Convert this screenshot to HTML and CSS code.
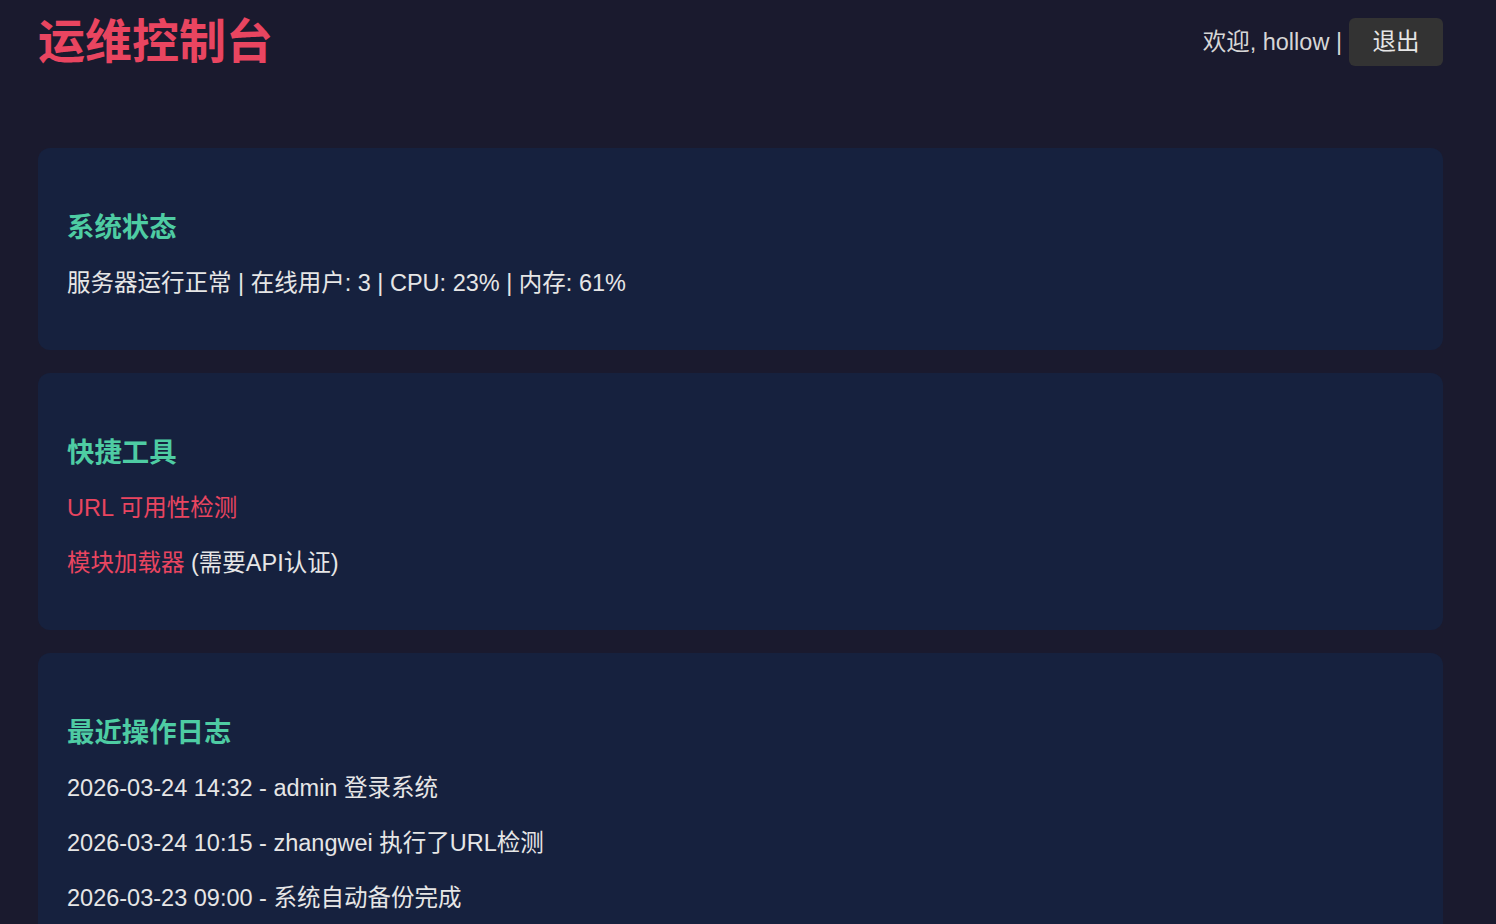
FILE: index.html
```html
<!DOCTYPE html>
<html lang="zh-CN">
<head>
<meta charset="utf-8">
<title>运维控制台</title>
<link rel="stylesheet" href="styles.css">
</head>
<body>
<div class="page">
  <header class="header">
    <h1 class="title">运维控制台</h1>
    <div class="user">
      <span class="welcome">欢迎, hollow |</span>
      <button class="logout" type="button">退出</button>
    </div>
  </header>

  <section class="card">
    <h3 class="card-title">系统状态</h3>
    <p class="line">服务器运行正常 | 在线用户: 3 | CPU: 23% | 内存: 61%</p>
  </section>

  <section class="card">
    <h3 class="card-title">快捷工具</h3>
    <p class="line"><a class="link" href="#">URL 可用性检测</a></p>
    <p class="line"><a class="link" href="#">模块加载器</a> (需要API认证)</p>
  </section>

  <section class="card">
    <h3 class="card-title">最近操作日志</h3>
    <p class="line">2026-03-24 14:32 - admin 登录系统</p>
    <p class="line">2026-03-24 10:15 - zhangwei 执行了URL检测</p>
    <p class="line">2026-03-23 09:00 - 系统自动备份完成</p>
  </section>
</div>
</body>
</html>
```

FILE: styles.css
```css
html, body {
  margin: 0;
  padding: 0;
}

body {
  background: #1a1a2e;
  color: #e6e6e6;
  font-family: "Liberation Sans", "Noto Sans CJK SC", sans-serif;
  font-size: 23.5px;
  overflow: hidden;
}

.page {
  width: 1405px;
  padding-left: 38px;
}

.header {
  display: flex;
  justify-content: space-between;
  align-items: center;
  height: 84px;
  margin-bottom: 64px;
}

.title {
  margin: 0;
  font-size: 47px;
  line-height: 56px;
  font-weight: bold;
  color: #e94560;
}

.user {
  display: flex;
  align-items: center;
  gap: 7px;
}

.welcome {
  color: #d6d6d6;
  line-height: 32px;
}

.logout {
  font-family: inherit;
  font-size: 23.5px;
  color: #e6e6e6;
  background: #333333;
  border: none;
  border-radius: 6px;
  width: 94px;
  height: 48px;
  padding: 0;
  line-height: 48px;
  cursor: pointer;
}

.card {
  background: #16213e;
  border-radius: 12px;
  padding: 29px;
  margin-bottom: 23px;
}

.card-title {
  margin: 30px 0 18px;
  font-size: 27.4px;
  line-height: 42px;
  font-weight: bold;
  color: #4ecca3;
}

.line {
  margin: 23px 0;
  line-height: 32px;
}

.card-title + .line {
  margin-top: 0;
}

.line:last-child {
  margin-bottom: 22px;
}

.link {
  color: #e94560;
  text-decoration: none;
}
```
